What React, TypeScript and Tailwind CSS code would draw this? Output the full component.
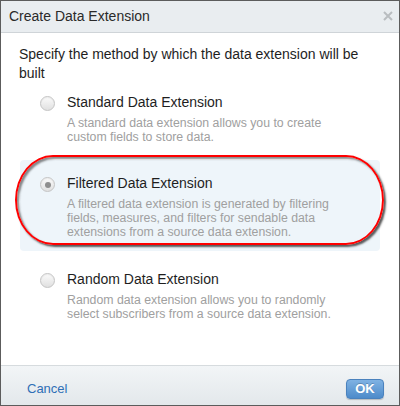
import React from "react";

type OptionProps = {
  title: string;
  text: string;
  selected?: boolean;
};

function Radio({ selected }: { selected?: boolean }) {
  return (
    <div className="mt-[3px] w-[15px] h-[15px] shrink-0 rounded-full border border-[#c4c4c4] bg-gradient-to-b from-[#fbfbfb] to-[#e0e0e0] flex items-center justify-center shadow-[inset_0_1px_1px_rgba(0,0,0,0.06)]">
      {selected ? <div className="w-[6px] h-[6px] rounded-full bg-[#8e8e8e]" /> : null}
    </div>
  );
}

function Option({ title, text, selected }: OptionProps) {
  return (
    <div className="flex items-start gap-[12px]">
      <Radio selected={selected} />
      <div className="w-[280px]">
        <div className="text-[14px] leading-[18px] text-[#1e1e1e]">{title}</div>
        <div className="mt-[5px] text-[12.3px] leading-[14px] text-[#a0a0a0]">{text}</div>
      </div>
    </div>
  );
}

export default function App() {
  return (
    <div
      className="w-[400px] h-[406px] flex flex-col border border-[#5c5c5c] bg-white"
      style={{ fontFamily: '"Liberation Sans", Arial, sans-serif' }}
    >
      <div className="h-[32px] shrink-0 flex items-center justify-between pl-[8px] pr-[6px] bg-[#e9edf0] border-b border-[#cfd4d8]">
        <span className="text-[14px] text-[#2a2a2a]">Create Data Extension</span>
        <svg width="10" height="10" viewBox="0 0 10 10" className="mt-[-2px]">
          <path d="M1 1L9 9M9 1L1 9" stroke="#b9bdc0" strokeWidth="2" />
        </svg>
      </div>

      <div className="flex-1 flex flex-col pt-[12px]">
        <p className="pl-[18px] pr-[40px] text-[14px] leading-[19px] text-[#1e1e1e]">
          Specify the method by which the data extension will be built
        </p>

        <div className="mt-[10px] mx-[19px] px-[20px]">
          <Option
            title="Standard Data Extension"
            text="A standard data extension allows you to create custom fields to store data."
          />
        </div>

        <div className="relative mt-[16px] mx-[19px] px-[20px] pt-[14px] pb-[12px] rounded-[4px] bg-[#eef5fa]">
          <Option
            selected
            title="Filtered Data Extension"
            text="A filtered data extension is generated by filtering fields, measures, and filters for sendable data extensions from a source data extension."
          />
          <div className="absolute left-[-5px] top-[-5px] w-[369px] h-[90px] rounded-[38px_/_45px] border-2 border-[#ff0000] shadow-[2px_2px_2px_rgba(50,50,50,0.8),inset_2px_2px_2px_rgba(60,60,60,0.6)] pointer-events-none" />
        </div>

        <div className="mt-[19px] mx-[19px] px-[20px]">
          <Option
            title="Random Data Extension"
            text="Random data extension allows you to randomly select subscribers from a source data extension."
          />
        </div>
      </div>

      <div className="h-[40px] shrink-0 flex items-center justify-between pt-[6px] pl-[26px] pr-[15px] border-t border-[#d6dbde] bg-gradient-to-b from-[#f2f5f7] to-[#e3e8eb]">
        <span className="text-[13px] text-[#2f6fb6]">Cancel</span>
        <button className="w-[38px] h-[20px] rounded-[4px] border border-[#4a82bd] bg-gradient-to-b from-[#7fb2e3] to-[#4d8bca] text-white text-[13px] font-bold leading-[18px] shadow-[0_1px_1px_rgba(0,0,0,0.2)] [text-shadow:0_-1px_0_rgba(0,0,0,0.2)]">
          OK
        </button>
      </div>
    </div>
  );
}
